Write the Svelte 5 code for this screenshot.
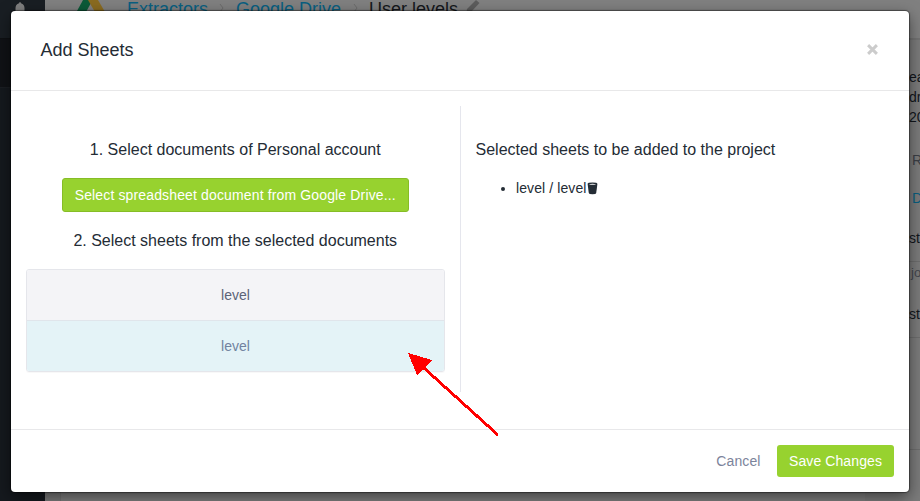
<script>
  const documents = [{ name: 'level', selected: false }, { name: 'level', selected: true }];
  const activity = [
    { text: 'ea', kind: 'dark', height: 20 },
    { text: 'dr', kind: 'dark', height: 20 },
    { text: '20', kind: 'dark', height: 20 },
    { text: 'R', kind: 'muted', height: 64 },
    { text: 'D', kind: 'link', height: 14 },
    { text: 'st', kind: 'dark row-first', height: 57 },
    { text: 'jo', kind: 'small', height: 22 },
    { text: 'st', kind: 'dark row-last', height: 54 }
  ];
</script>

<div class="screen">
  <div class="page">
    <aside class="sidebar">
      <div class="bell">
        <svg width="12" height="14" viewBox="0 0 12 14"><path d="M5 1.2 Q6 -1 7 1.2 Q10.5 2.5 10.5 6 V9 L12 11 V12 H0 V11 L1.5 9 V6 Q1.5 2.5 5 1.2Z" fill="#7f7f7f" /></svg>
      </div>
      <div class="nav"></div>
      <div class="rest"></div>
    </aside>
    <main>
      <nav class="crumbs">
        <svg class="drive" width="30" height="26" viewBox="0 0 30 26"><path d="M6 0H12L14 3L9 12L4 20L0 11Z" fill="#0c5a38" /><path d="M11 0H21L28 12H18Z" fill="#8a6b20" /></svg>
        <span class="link extract">Extractors</span>
        <svg class="chevron" width="6" height="10" viewBox="0 0 6 10"><path d="M1 1L4 5L1 9" /></svg>
        <span class="link">Google Drive</span>
        <svg class="chevron second" width="6" height="10" viewBox="0 0 6 10"><path d="M1 1L4 5L1 9" /></svg>
        <span>User levels</span>
        <svg class="pencil" width="14" height="16" viewBox="0 0 14 16"><path d="M10 0L13.5 3L4 13L0 15L1 9Z" fill="#5c5c5c" /></svg>
      </nav>
      <div class="content">
        <div class="canvas"></div>
        <div class="activity">
          {#each activity as item}
            <div class={item.kind} style:height="{item.height}px">{item.text}</div>
          {/each}
          <div class="tail"></div>
        </div>
      </div>
    </main>
  </div>

  <section class="modal" role="dialog" aria-label="Add Sheets">
    <header>
      <h1>Add Sheets</h1>
      <button class="close" aria-label="Close"><svg width="11" height="11" viewBox="0 0 11 11"><path d="M1.1 1.1L9.9 9.9M9.9 1.1L1.1 9.9" /></svg></button>
    </header>
    <div class="body">
      <div class="left">
        <h2>1. Select documents of Personal account</h2>
        <button class="green choose">Select spreadsheet document from Google Drive...</button>
        <h2 class="step">2. Select sheets from the selected documents</h2>
        <div class="list">
          {#each documents as doc}
            <div class="sheet" class:selected={doc.selected}>{doc.name}</div>
          {/each}
        </div>
      </div>
      <div class="right">
        <h2>Selected sheets to be added to the project</h2>
        <ul><li>level / level<svg class="trash" width="11" height="13" viewBox="0 0 11 13"><path d="M.6 2Q.6 .6 5.5 .6Q10.4 .6 10.4 2L9.2 11Q9 12.2 5.5 12.2Q2 12.2 1.8 11Z" fill="#242c35" /><path d="M1.8 2.2Q5.5 1.2 9.2 2.2Q5.5 3.3 1.8 2.2Z" fill="#fff" /></svg></li></ul>
      </div>
    </div>
    <footer>
      <button class="cancel">Cancel</button>
      <button class="green save">Save Changes</button>
    </footer>
  </section>
  <svg class="arrow" width="94" height="86" viewBox="0 0 94 86" shape-rendering="crispEdges"><path d="M16 15L90 82" stroke="#f00" stroke-width="2.9" /><path d="M0 0L24 7L9 22Z" fill="#f00" /></svg>
</div>

<style>
  :global(body) { overflow: hidden; }
  * { box-sizing: border-box; }
  .screen { position: relative; width: 920px; height: 501px; padding: 11px; overflow: hidden; font: 14px/20px "Liberation Sans", Arial, sans-serif; color: #242c35; }
  .page { position: absolute; inset: 0; display: flex; background: #7b7b7b; }
  .sidebar { width: 45px; flex: none; display: flex; flex-direction: column; background: #15191e; }
  .bell { height: 39px; padding: 1px 0 0 14px; border-bottom: 1px solid #0e1013; background: #191e23; }
  .nav { height: 49px; background: #101216; border-bottom: 1px solid #1b1e23; }
  .rest { flex: 1; }
  main { flex: 1; display: flex; flex-direction: column; min-width: 0; }
  .crumbs { height: 40px; flex: none; border-bottom: 2px solid #737373; background: #808080; padding-left: 32px; display: flex; align-items: flex-start; font-size: 18px; line-height: 18px; color: #14171b; white-space: nowrap; }
  .drive { flex: none; margin-right: 20px; }
  .crumbs .link { color: #095f80; }
  .chevron { flex: none; margin: 3px 11px 0; fill: none; stroke: #6c6c6c; }
  .second { margin-left: 12px; margin-right: 10px; }
  .pencil { margin-left: 8px; }
  .content { display: flex; flex: 1; }
  .canvas { width: 805px; margin-left: 15px; background: #7f7f7f; border-left: 1px solid #747474; }
  .activity { margin-left: 44px; width: 11px; padding-top: 27px; overflow: hidden; white-space: nowrap; background: #7b7b7b; flex: none; }
  .dark { color: #12161b; }
  .muted { padding: 23px 0 0 3px; color: #3c3f46; }
  .activity .link { padding-left: 3px; color: #095f80; line-height: 14px; }
  .row-first { padding-top: 23px; border-bottom: 1px solid #6d6d6d; }
  .small { padding: 1px 0 0 2px; font-size: 13px; color: #44464e; }
  .row-last { padding-top: 20px; border-bottom: 1px solid #6d6d6d; }
  .tail { height: 112px; border-bottom: 1px solid #6d6d6d; }
  .modal { position: relative; width: 898px; height: 481px; border-radius: 4px; background: #fff; box-shadow: 0 0 1px 1px #0006, 0 5px 15px #00000080; display: flex; flex-direction: column; }
  header { height: 80px; padding: 29px 31px 0 29.5px; border-bottom: 1px solid #e8e8e9; display: flex; justify-content: space-between; align-items: flex-start; }
  h1, h2 { margin: 0; font-weight: 400; }
  h1 { font-size: 18px; line-height: 20px; }
  h2 { font-size: 16px; line-height: 18px; }
  button { border: 0; padding: 0; font: inherit; background: none; }
  .close { height: 11px; margin-top: 4px; }
  .close svg { display: block; fill: none; stroke: #ccc; stroke-width: 2.9; }
  .body { height: 338px; padding-top: 15px; display: flex; }
  .left { width: 449px; padding: 35px 15.5px 0 15px; text-align: center; }
  .right { height: 286px; flex: 1; padding: 35px 15px 0 14.5px; border-left: 1px solid #e5e6ed; }
  .green { background: #97d22f; color: #fff; border-radius: 3px; }
  .choose { display: block; width: 347px; height: 34px; margin: 19px auto 0; border: 1px solid #86bd26; white-space: nowrap; letter-spacing: .14px; }
  .step { margin-top: 20px; }
  .list { width: 419px; margin-top: 19px; height: 103px; border: 1px solid #e5e6eb; border-radius: 3px; box-shadow: 0 1px 1px #00000008; overflow: hidden; }
  .sheet { height: 50px; background: #f4f4f7; color: #5c6377; line-height: 51px; }
  .selected { height: 51px; background: #e4f3f7; color: #71829f; border-top: 1px solid #e0e5eb; line-height: 51px; }
  ul { margin: 19px 0 0; padding-left: 40.5px; }
  li { letter-spacing: .1px; }
  .trash { margin: 0; vertical-align: -2px; }
  footer { height: 63px; padding: 15px; border-top: 1px solid #e8e8ea; display: flex; justify-content: flex-end; align-items: flex-start; }
  .cancel { margin-right: 16.5px; height: 32px; color: #7c849b; letter-spacing: .1px; }
  .save { width: 117px; height: 32px; letter-spacing: .1px; }
  .arrow { position: absolute; left: 408px; top: 353px; }
</style>
